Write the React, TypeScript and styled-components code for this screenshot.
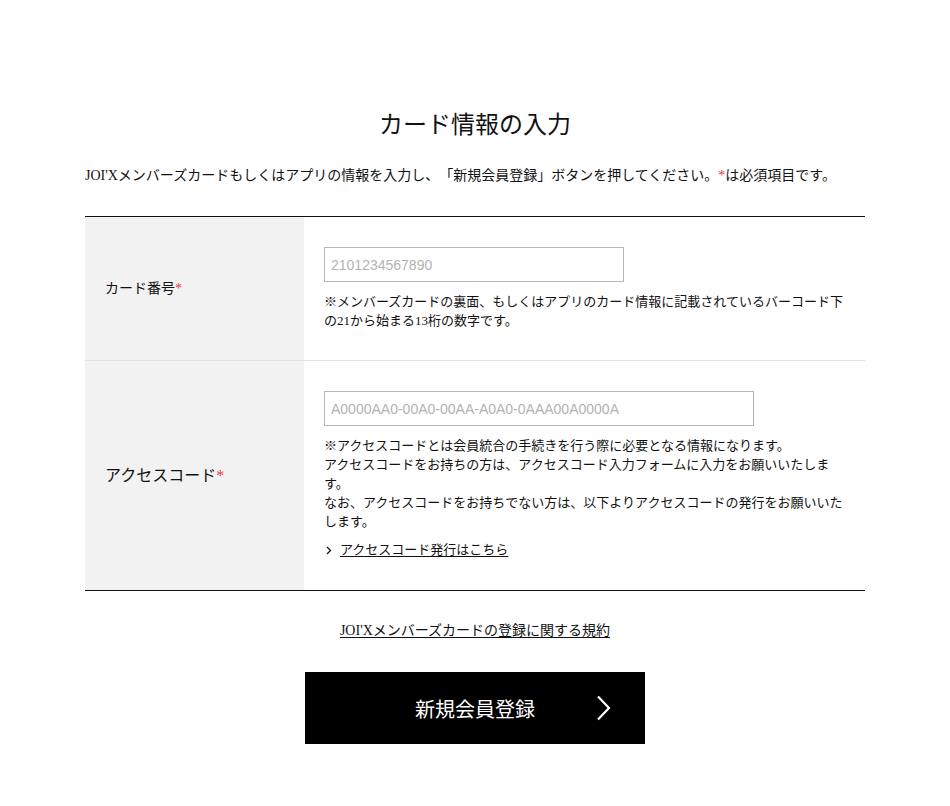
import * as React from 'react';
import styled, { createGlobalStyle } from 'styled-components';

const GlobalStyle = createGlobalStyle`
  html, body {
    margin: 0;
    padding: 0;
    background: #fff;
  }
  body {
    font-family: "Liberation Serif", "Noto Sans CJK JP", sans-serif;
    color: #111;
    text-spacing-trim: space-all;
  }
`;

const Chevron = ({ size = 'small' }: { size?: 'small' | 'large' }) =>
  size === 'large' ? (
    <svg width="15" height="26" viewBox="0 0 15 26" fill="none">
      <path d="M2 1.5 L13 13 L2 24.5" stroke="#fff" strokeWidth="2.2" />
    </svg>
  ) : (
    <svg width="6" height="9" viewBox="0 0 6 9" fill="none">
      <path d="M1 1 L4.5 4.5 L1 8" stroke="#111" strokeWidth="1.3" />
    </svg>
  );

const App = () => (
  <>
    <GlobalStyle />
    <Page>
      <Title>カード情報の入力</Title>
      <Intro>
        JOI'Xメンバーズカードもしくはアプリの情報を入力し、「新規会員登録」ボタンを押してください。
        <Required>*</Required>は必須項目です。
      </Intro>

      <Table>
        <Row>
          <LabelCell size={14}>
            カード番号<Required>*</Required>
          </LabelCell>
          <FieldCell>
            <Input width={300} placeholder="2101234567890" />
            <Note>
              ※メンバーズカードの裏面、もしくはアプリのカード情報に記載されているバーコード下の21から始まる13桁の数字です。
            </Note>
          </FieldCell>
        </Row>
        <Row>
          <LabelCell size={16}>
            アクセスコード<Required>*</Required>
          </LabelCell>
          <FieldCell>
            <Input width={430} placeholder="A0000AA0-00A0-00AA-A0A0-0AAA00A0000A" />
            <Note>
              ※アクセスコードとは会員統合の手続きを行う際に必要となる情報になります。
              <br />
              アクセスコードをお持ちの方は、アクセスコード入力フォームに入力をお願いいたします。
              <br />
              なお、アクセスコードをお持ちでない方は、以下よりアクセスコードの発行をお願いいたします。
            </Note>
            <ArrowLink href="#">
              <Chevron />
              <span>アクセスコード発行はこちら</span>
            </ArrowLink>
          </FieldCell>
        </Row>
      </Table>

      <TermsLink href="#">JOI'Xメンバーズカードの登録に関する規約</TermsLink>

      <SubmitButton type="button">
        新規会員登録
        <ButtonArrow>
          <Chevron size="large" />
        </ButtonArrow>
      </SubmitButton>
    </Page>
  </>
);

const Page = styled.div`
  width: 780px;
  margin: 0 auto;
  padding: 107px 0 60px;
  display: flex;
  flex-direction: column;
  align-items: stretch;
`;

const Title = styled.h2`
  margin: 0;
  font-size: 24px;
  line-height: 36px;
  font-weight: normal;
  text-align: center;
  color: #111;
`;

const Intro = styled.p`
  margin: 23px 0 0;
  font-size: 14px;
  line-height: 20px;
  white-space: nowrap;
`;

const Required = styled.span`
  color: #e8383d;
`;

const Table = styled.div`
  margin-top: 30px;
  border-top: 1px solid #111;
  border-bottom: 1px solid #111;
`;

const Row = styled.div`
  display: grid;
  grid-template-columns: 219px 1fr;
  & + & {
    border-top: 1px solid #e2e2e2;
  }
`;

const LabelCell = styled.div<{ size: number }>`
  background: #f2f2f2;
  display: flex;
  align-items: center;
  padding: 0 20px;
  font-size: ${p => p.size}px;
  line-height: 20px;
`;

const FieldCell = styled.div`
  padding: 30px 20px;
  display: flex;
  flex-direction: column;
  align-items: flex-start;
`;

const Input = styled.input<{ width: number }>`
  box-sizing: border-box;
  width: ${p => p.width}px;
  height: 35px;
  border: 1px solid #b5b5b5;
  border-radius: 0;
  padding: 0 6px;
  font-family: "Liberation Sans", Arial, sans-serif;
  font-size: 14px;
  outline: none;
  &::placeholder {
    color: #b3b3b3;
  }
`;

const Note = styled.p`
  margin: 10px 0 0;
  font-size: 13px;
  line-height: 19px;
`;

const ArrowLink = styled.a`
  margin-top: 9px;
  display: flex;
  align-items: center;
  gap: 8px;
  padding-left: 2px;
  font-size: 13px;
  line-height: 20px;
  color: #111;
  text-decoration: none;

  span {
    text-decoration: underline;
    text-underline-offset: 2px;
  }
`;

const TermsLink = styled.a`
  align-self: center;
  margin-top: 30px;
  font-size: 14px;
  line-height: 20px;
  color: #111;
  text-decoration: underline;
  text-underline-offset: 2px;
`;

const SubmitButton = styled.button`
  position: relative;
  align-self: center;
  margin-top: 31px;
  width: 340px;
  height: 72px;
  border: none;
  border-radius: 0;
  background: #000;
  color: #fff;
  font-family: "Noto Sans CJK JP", sans-serif;
  font-size: 20px;
  cursor: pointer;
`;

const ButtonArrow = styled.span`
  position: absolute;
  right: 34px;
  top: 50%;
  transform: translateY(-50%);
  display: flex;
`;

export default App;
